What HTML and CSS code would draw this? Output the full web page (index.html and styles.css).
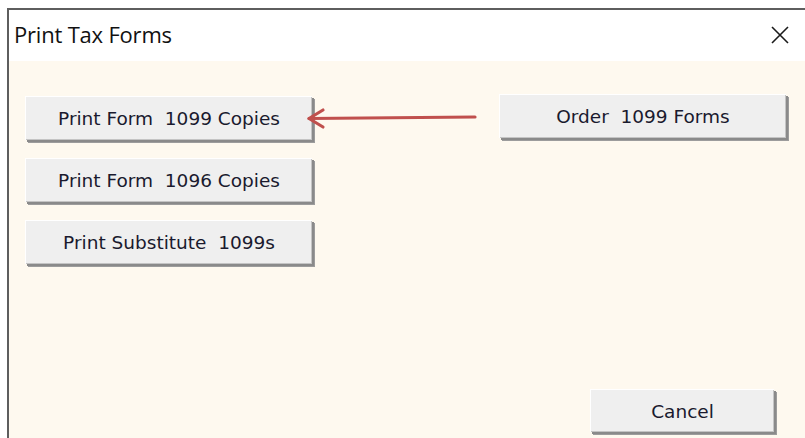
FILE: index.html
```html
<!DOCTYPE html>
<html>
<head>
<meta charset="utf-8">
<title>Print Tax Forms</title>
<link rel="stylesheet" href="styles.css">
</head>
<body>
  <div class="backdrop"></div>
  <div class="dialog">
    <div class="titlebar">
      <span class="title">Print Tax Forms</span>
      <span class="close">
        <svg width="20" height="20" viewBox="0 0 20 20"><path d="M2 2 L18 18 M18 2 L2 18" stroke="#1a1a1a" stroke-width="1.6" fill="none"/></svg>
      </span>
    </div>
    <div class="client">
      <div class="top-row">
        <div class="stack">
          <button class="btn wide">Print Form  1099 Copies</button>
          <button class="btn wide">Print Form  1096 Copies</button>
          <button class="btn wide">Print Substitute  1099s</button>
        </div>
        <button class="btn wide">Order  1099 Forms</button>
      </div>
      <div class="footer">
        <button class="btn cancel">Cancel</button>
      </div>
      <svg class="pointer" width="180" height="24" viewBox="0 0 180 24">
        <path d="M172 11 L6 12.5" stroke="#c0504d" stroke-width="3.2" stroke-linecap="round" fill="none"/>
        <path d="M20 4 L6 12.5 L20 21" stroke="#c0504d" stroke-width="3.2" stroke-linecap="round" stroke-linejoin="round" fill="none"/>
      </svg>
    </div>
  </div>
</body>
</html>
```
FILE: styles.css
```css
html, body {
  margin: 0;
  padding: 0;
  width: 805px;
  height: 438px;
  overflow: hidden;
  background: #ffffff;
}

.backdrop {
  height: 8px;
  background: #ffffff;
}

.dialog {
  margin-left: 7px;
  height: 430px;
  border-top: 2px solid #5e5e5e;
  border-left: 2px solid #5e5e5e;
  display: flex;
  flex-direction: column;
}

.titlebar {
  height: 51px;
  flex: none;
  background: #ffffff;
  display: flex;
  align-items: center;
  justify-content: space-between;
  padding: 0 15px 0 5px;
}

.title {
  font-family: "Open Sans", "Noto Sans", sans-serif;
  font-size: 22px;
  color: #111111;
  letter-spacing: -0.2px;
  margin-top: -3px;
}

.close {
  display: flex;
  margin-top: -2px;
}

.client {
  position: relative;
  flex: 1;
  background: #fef9ef;
  display: flex;
  flex-direction: column;
  justify-content: space-between;
  padding: 33px 16px 5px 16px;
}

.top-row {
  display: flex;
  justify-content: space-between;
  align-items: flex-start;
}

.stack {
  display: flex;
  flex-direction: column;
  gap: 15px;
  padding-top: 2px;
}

.btn {
  font-family: "DejaVu Sans", sans-serif;
  font-size: 18.5px;
  color: #1a1a2e;
  white-space: pre;
  background: #efefef;
  border: none;
  border-top: 1px solid #ffffff;
  border-left: 1px solid #ffffff;
  box-shadow: inset -1px -1px 0 #c4c4c4, 2px 2px 0 #8a8a8a, 3px 3px 0 #9c9c9c;
  margin: 0 3px 3px 0;
  padding: 0;
  height: 44px;
}

.wide {
  width: 287px;
}

.footer {
  display: flex;
  justify-content: flex-end;
  padding-right: 12px;
}

.cancel {
  width: 184px;
  height: 43px;
}

.pointer {
  position: absolute;
  left: 294px;
  top: 45px;
}
```
